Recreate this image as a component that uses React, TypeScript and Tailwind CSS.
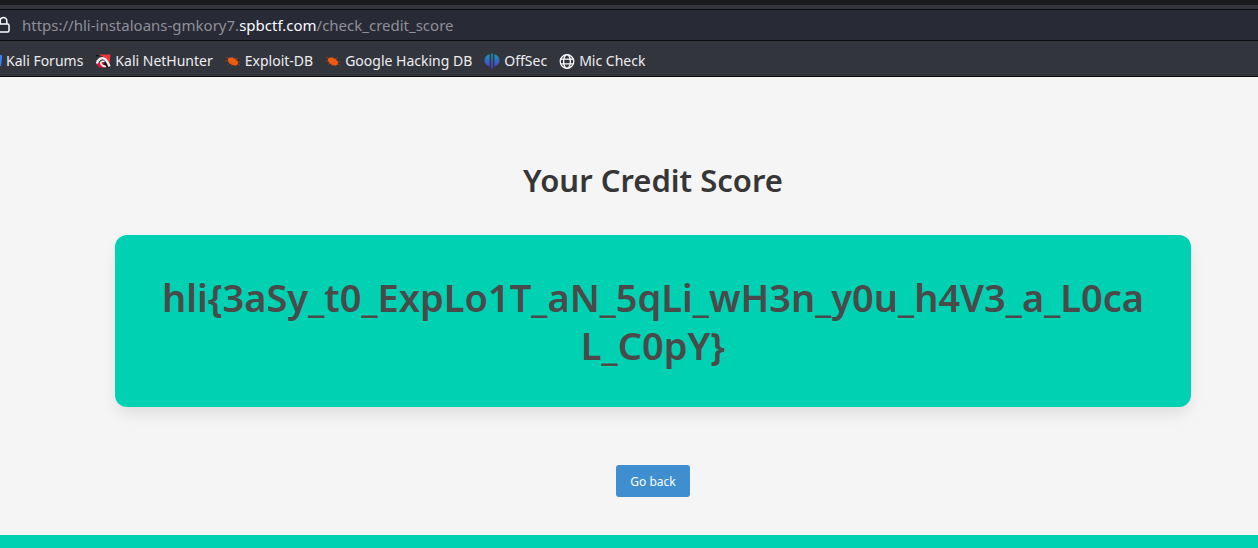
import React from "react";

function LockIcon() {
  return (
    <svg viewBox="0 0 14 18" className="h-[18px] w-[14px]" fill="none" stroke="#fbfbfe" strokeWidth="1.5">
      <rect x="2" y="8" width="11" height="8" rx="1.5" />
      <path d="M4.2 8V4.8a3.3 3.3 0 0 1 6.6 0V8" />
    </svg>
  );
}

function NetHunterIcon() {
  return (
    <svg viewBox="0 0 16 16" className="size-4">
      <path d="M.5 2h3.500l-2 2zM4 6L.5 9v2z" fill="#151214" />
      <path d="M4 1.500H15.500L14.500 11 11 5.500z" fill="#f4323a" />
      <path d="M1 10.500L4 14.500h10L8 9z" fill="#d5153c" />
      <path d="M8.500 11l3.500 3.500h2.500L12 8.500z" fill="#151214" />
      <path d="M1.800 10.500C3 6 6.500 4.200 9.500 5.700S13 10.500 14.500 13.500" fill="none" stroke="#f6eeee" strokeWidth="2.400" />
      <path d="M9.500 8.500C7 7.500 5 9.300 6 11s3 2.500 5 2.300" fill="none" stroke="#f6eeee" strokeWidth="1.600" />
    </svg>
  );
}

function BugIcon() {
  return (
    <svg viewBox="0 0 16 16" className="size-4" fill="#ef5a0e" stroke="#ef5a0e">
      <ellipse cx="8" cy="8.500" rx="5.500" ry="3.300" transform="rotate(28 8 8.500)" stroke="none" />
      <path
        d="M4 6L1 4M3.500 8L.5 8M5 10l-2 1.500M7 11v2M7 5l1-1.500M10 6l3-1M12 9h3.500M12.500 11l2.500 1.500M10 12l1 1.500"
        fill="none"
        strokeWidth=".7"
        opacity=".6"
      />
    </svg>
  );
}

function OffSecIcon() {
  return (
    <svg viewBox="0 0 16 16" className="size-4">
      <defs>
        <linearGradient id="offsec" gradientUnits="userSpaceOnUse" x1="0" y1="0" x2="0" y2="16">
          <stop offset="0" stopColor="#149fae" />
          <stop offset="1" stopColor="#5432dc" />
        </linearGradient>
      </defs>
      <g fill="url(#offsec)">
        <path d="M5.700 1.200v12.300C2.500 12.600.5 10.600.5 7.500s2-5.600 5.200-6.300z" />
        <path d="M10.300 1.200v12.300c3.200-.9 5.200-2.900 5.200-6s-2-5.600-5.200-6.300z" />
        <path d="M7.200 .5h1.600v15H7.200z" />
      </g>
    </svg>
  );
}

function GlobeIcon() {
  return (
    <svg viewBox="0 0 16 16" className="size-4" fill="none" stroke="#fbfbfe" strokeWidth="1.3">
      <circle cx="8" cy="8.500" r="6.800" />
      <ellipse cx="8" cy="8.500" rx="3.400" ry="6.800" />
      <path d="M1.500 6.200h13M1.500 10.800h13" />
    </svg>
  );
}

function ForumsIcon() {
  return (
    <svg viewBox="0 0 2 16" className="h-4 w-[2px]">
      <path d="M0 2h2v3L1 13H0z" fill="#3584f5" />
    </svg>
  );
}

const bookmarks = [
  { label: "Kali Forums", icon: <ForumsIcon /> },
  { label: "Kali NetHunter", icon: <NetHunterIcon /> },
  { label: "Exploit-DB", icon: <BugIcon /> },
  { label: "Google Hacking DB", icon: <BugIcon /> },
  { label: "OffSec", icon: <OffSecIcon /> },
  { label: "Mic Check", icon: <GlobeIcon /> },
];

export default function App() {
  return (
    <div className="flex min-h-screen flex-col bg-[#f5f5f5] font-['Noto_Sans',sans-serif]">
      <header className="bg-[#33353d]">
        <div className="h-[5px] bg-[#1a1b1f]" />
        <div className="mt-1 flex h-8 items-center gap-3 border-y border-[#0c0c0f] bg-[#282a36] pr-3 text-[15px] leading-5">
          <span className="-ml-1">
            <LockIcon />
          </span>
          <div className="text-[#8f9096]">
            https://hli-instaloans-gmkory7.<span className="text-[#fbfbfe]">spbctf.com</span>/check_credit_score
          </div>
        </div>
        <nav
          aria-label="Bookmarks"
          className="flex h-9 items-center gap-3 border-b border-[#0c0c0f] pt-1 text-sm leading-5 whitespace-nowrap text-[#ededf0]"
        >
          {bookmarks.map((b) => (
            <a key={b.label} href="#" className="flex items-center gap-1">
              {b.icon}
              {b.label}
            </a>
          ))}
        </nav>
      </header>

      <main className="flex flex-1 flex-col items-center pt-20 pr-[67px] pb-[38px] pl-[115px] text-center">
        <h1 className="text-[31px] leading-[46px] font-semibold text-[#363636]">Your Credit Score</h1>
        <div className="mt-8 w-full rounded-xl bg-[#00d1b2] px-10 py-[38px] shadow-[0_8px_16px_-2px_rgba(10,10,10,0.1)]">
          <p className="text-[38px] leading-[48px] font-semibold break-all text-[#4a4a4a]">
            {"hli{3aSy_t0_ExpLo1T_aN_5qLi_wH3n_y0u_h4V3_a_L0caL_C0pY}"}
          </p>
        </div>
        <button type="button" className="mt-[58px] h-8 rounded-[3px] bg-[#3e8ed0] px-[14px] pt-px text-xs text-white">
          Go back
        </button>
      </main>

      <footer className="h-[13px] bg-[#00d1b2]" />
    </div>
  );
}
